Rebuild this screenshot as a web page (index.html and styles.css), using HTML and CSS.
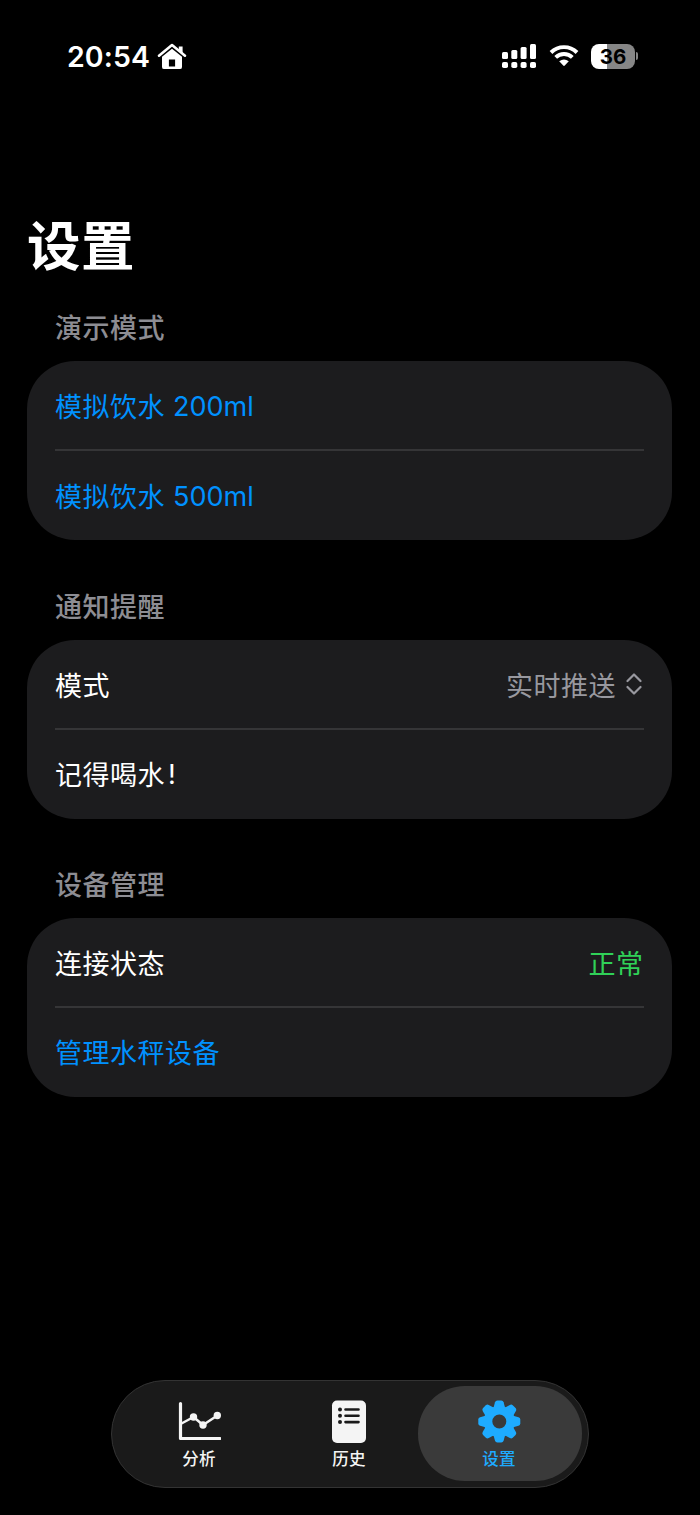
FILE: index.html
```html
<!DOCTYPE html>
<html lang="zh-CN">
<head>
  <meta charset="UTF-8" />
  <meta name="viewport" content="width=device-width, initial-scale=1" />
  <title>设置</title>
  <link rel="stylesheet" href="styles.css">
</head>
<body>
  <div class="status-bar">
    <div class="status-left">
      <span class="time">20:54</span>
      <svg class="home" width="30" height="28" viewBox="0 0 30 28">
        <path d="M2 13.7 15 3l13 10.7" fill="none" stroke="#fff" stroke-width="2.6" stroke-linecap="round" stroke-linejoin="round"/>
        <path d="M21.8 4.5h3.8v7.2l-3.8-3z" fill="#fff"/>
        <path fill-rule="evenodd" d="M5 14.8 15 6.7l10 8.1v10.1q0 2.2-2.2 2.2H7.2Q5 27.1 5 24.9zM11.9 17.5v7h6.2v-7z" fill="#fff"/>
      </svg>
    </div>
    <div class="status-right">
      <svg class="signal" width="36" height="26" viewBox="0 0 36 26" fill="#fff">
        <rect x="1" y="9" width="6" height="7" rx="1.5"/>
        <rect x="10.3" y="7" width="6" height="9" rx="1.5"/>
        <rect x="19.6" y="4" width="6" height="12" rx="1.5"/>
        <rect x="29" y="1" width="6" height="15" rx="1.5"/>
        <rect x="1" y="19" width="6" height="6" rx="1.8"/>
        <rect x="10.3" y="19" width="6" height="6" rx="1.8"/>
        <rect x="19.6" y="19" width="6" height="6" rx="1.8"/>
        <rect x="29" y="19" width="6" height="6" rx="1.8"/>
      </svg>
      <svg class="wifi" width="30" height="24" viewBox="0 0 30 24">
        <path d="M2 8.5a18.5 18.5 0 0 1 26 0M6.7 13.3a11.9 11.9 0 0 1 16.6 0" fill="none" stroke="#fff" stroke-width="3.9"/>
        <path d="M10.2 17.3q4.8-3.6 9.6 0l-4 4.3q-.8.7-1.6 0z" fill="#fff"/>
      </svg>
      <div class="battery"><span class="battery-level">36</span></div>
      <div class="battery-cap"></div>
    </div>
  </div>

  <main class="content">
    <h1>设置</h1>

    <section>
      <h2>演示模式</h2>
      <div class="card">
        <div class="row link"><span>模拟饮水 <span class="latin amount">200ml</span></span></div>
        <div class="row link"><span>模拟饮水 <span class="latin amount">500ml</span></span></div>
      </div>
    </section>

    <section>
      <h2>通知提醒</h2>
      <div class="card">
        <div class="row">
          <span>模式</span>
          <span class="value">实时推送
            <svg width="16" height="22" viewBox="0 0 16 22" fill="none" stroke="#98989f" stroke-width="2.2" stroke-linecap="round" stroke-linejoin="round">
              <path d="M1.5 8 8 1.500 14.500 8M1.5 14 8 20.500 14.500 14"/>
            </svg>
          </span>
        </div>
        <div class="row"><span>记得喝水<span class="latin mark">!</span></span></div>
      </div>
    </section>

    <section>
      <h2>设备管理</h2>
      <div class="card">
        <div class="row"><span>连接状态</span><span class="ok">正常</span></div>
        <div class="row link"><span>管理水秤设备</span></div>
      </div>
    </section>
  </main>

  <nav class="tab-bar">
    <a class="tab">
      <svg width="44" height="44" viewBox="0 0 44 44" fill="none" stroke="#f4f4f4" stroke-linecap="round" stroke-linejoin="round">
        <path d="M3.5 3.500v35H43" stroke-width="3.200"/>
        <path d="M4.500 23.500 16.500 17l9.500 8L40 15.800" stroke-width="2.500"/>
        <g fill="#f4f4f4" stroke="none">
          <circle cx="16.500" cy="17" r="3.700"/>
          <circle cx="26" cy="25" r="3.700"/>
          <circle cx="40.300" cy="15.500" r="3.700"/>
        </g>
      </svg>
      <span>分析</span>
    </a>
    <a class="tab">
      <svg width="44" height="44" viewBox="0 0 44 44">
        <rect x="5" y="0.5" width="34" height="42.5" rx="5" fill="#f4f4f4"/>
        <g fill="#1a1a1a">
          <circle cx="13" cy="9.5" r="2"/>
          <circle cx="13" cy="15.7" r="2"/>
          <circle cx="13" cy="22.1" r="2"/>
        </g>
        <path d="M18.5 9.5h13M18.5 15.7h13M18.5 22.1h13" stroke="#1a1a1a" stroke-width="2.6" stroke-linecap="round"/>
      </svg>
      <span>历史</span>
    </a>
    <a class="tab active">
      <svg width="44" height="44" viewBox="-22.3 -21.5 44 44" fill="#1eabff">
        <defs>
          <path id="tooth" d="M-6-13-4.300-19.200Q-3.700-21-2-21H2Q3.700-21 4.300-19.200L6-13z"/>
        </defs>
        <circle r="11.3" fill="none" stroke="#1eabff" stroke-width="8.6"/>
        <use href="#tooth"/>
        <use href="#tooth" transform="rotate(45)"/>
        <use href="#tooth" transform="rotate(90)"/>
        <use href="#tooth" transform="rotate(135)"/>
        <use href="#tooth" transform="rotate(180)"/>
        <use href="#tooth" transform="rotate(225)"/>
        <use href="#tooth" transform="rotate(270)"/>
        <use href="#tooth" transform="rotate(315)"/>
      </svg>
      <span>设置</span>
    </a>
  </nav>
</body>
</html>
```
FILE: styles.css
```css
* {
  box-sizing: border-box;
}
body {
  margin: 0;
  height: 1515px;
  display: flex;
  flex-direction: column;
  background: #000;
  color: #fff;
  font-family: "Noto Sans CJK SC", sans-serif;
  font-size: 27px;
  letter-spacing: 0.5px;
}
svg {
  display: block;
  flex: none;
}
.status-bar {
  display: flex;
  justify-content: space-between;
  align-items: center;
  height: 113px;
  padding: 0 62px 0 67px;
}
.status-left,
.status-right {
  display: flex;
  align-items: center;
}
.status-right {
  padding-bottom: 1px;
}
.time {
  width: 90px;
  font: 600 28.5px Inter, sans-serif;
  letter-spacing: 0.1px;
}
.home {
  margin-bottom: 2px;
}
.wifi {
  margin: 0 12px 0 12px;
}
.battery {
  width: 44px;
  height: 25px;
  border-radius: 8px;
  background: linear-gradient(90deg, #fff 36%, #868686 36%);
  color: #000;
  text-align: center;
  font: 700 20.5px/25px Inter, sans-serif;
  letter-spacing: 0;
}
.battery-cap {
  width: 2px;
  height: 8px;
  margin-left: 1px;
  border-radius: 0 2px 2px 0;
  background: #868686;
}
.content {
  flex: 1;
  padding: 90px 28px 0 27px;
}
h1 {
  margin: 0;
  height: 80px;
  font-size: 53.5px;
  font-weight: 700;
  line-height: 80px;
}
h2 {
  margin: 0 0 14px;
  padding-left: 28px;
  color: #8d8d93;
  font-size: 27px;
  font-weight: 500;
  line-height: 40px;
}
section {
  height: 278.3px;
}
h1 + section {
  margin-top: 24.4px;
}
.card {
  height: 179px;
  padding: 0 28px;
  border-radius: 48px;
  background: #1c1c1e;
}
.row {
  display: flex;
  justify-content: space-between;
  align-items: center;
  height: 88px;
  padding-top: 1px;
}
.row + .row {
  height: 91px;
  padding: 0 0 1px;
  border-top: 2px solid #353537;
}
.latin {
  font-family: Inter, sans-serif;
  letter-spacing: 0;
  vertical-align: 1px;
}
.amount {
  margin-left: 1.5px;
}
.mark {
  margin-left: 3px;
}
.link {
  color: #0091ff;
}
.value {
  display: flex;
  align-items: center;
  gap: 10px;
  padding-right: 2px;
  color: #98989f;
}
.ok {
  padding-right: 0.5px;
  color: #30d158;
}
.tab-bar {
  display: flex;
  justify-content: space-between;
  width: 478px;
  height: 108px;
  margin: 0 auto 27px 110.5px;
  padding: 5px 6px 6px;
  border: 1.5px solid #333;
  border-radius: 54px;
  background: #1a1a1a;
}
.tab {
  display: flex;
  flex-direction: column;
  align-items: center;
  width: 164px;
  padding: 13.5px 1px 0 0;
  border-radius: 47px;
  color: #f4f4f4;
  font-size: 16.5px;
  font-weight: 500;
  letter-spacing: 0.3px;
  line-height: 29px;
}
.tab + .tab {
  margin-left: -14px;
}
.active {
  background: #3a3a3a;
  color: #1eabff;
}
```
